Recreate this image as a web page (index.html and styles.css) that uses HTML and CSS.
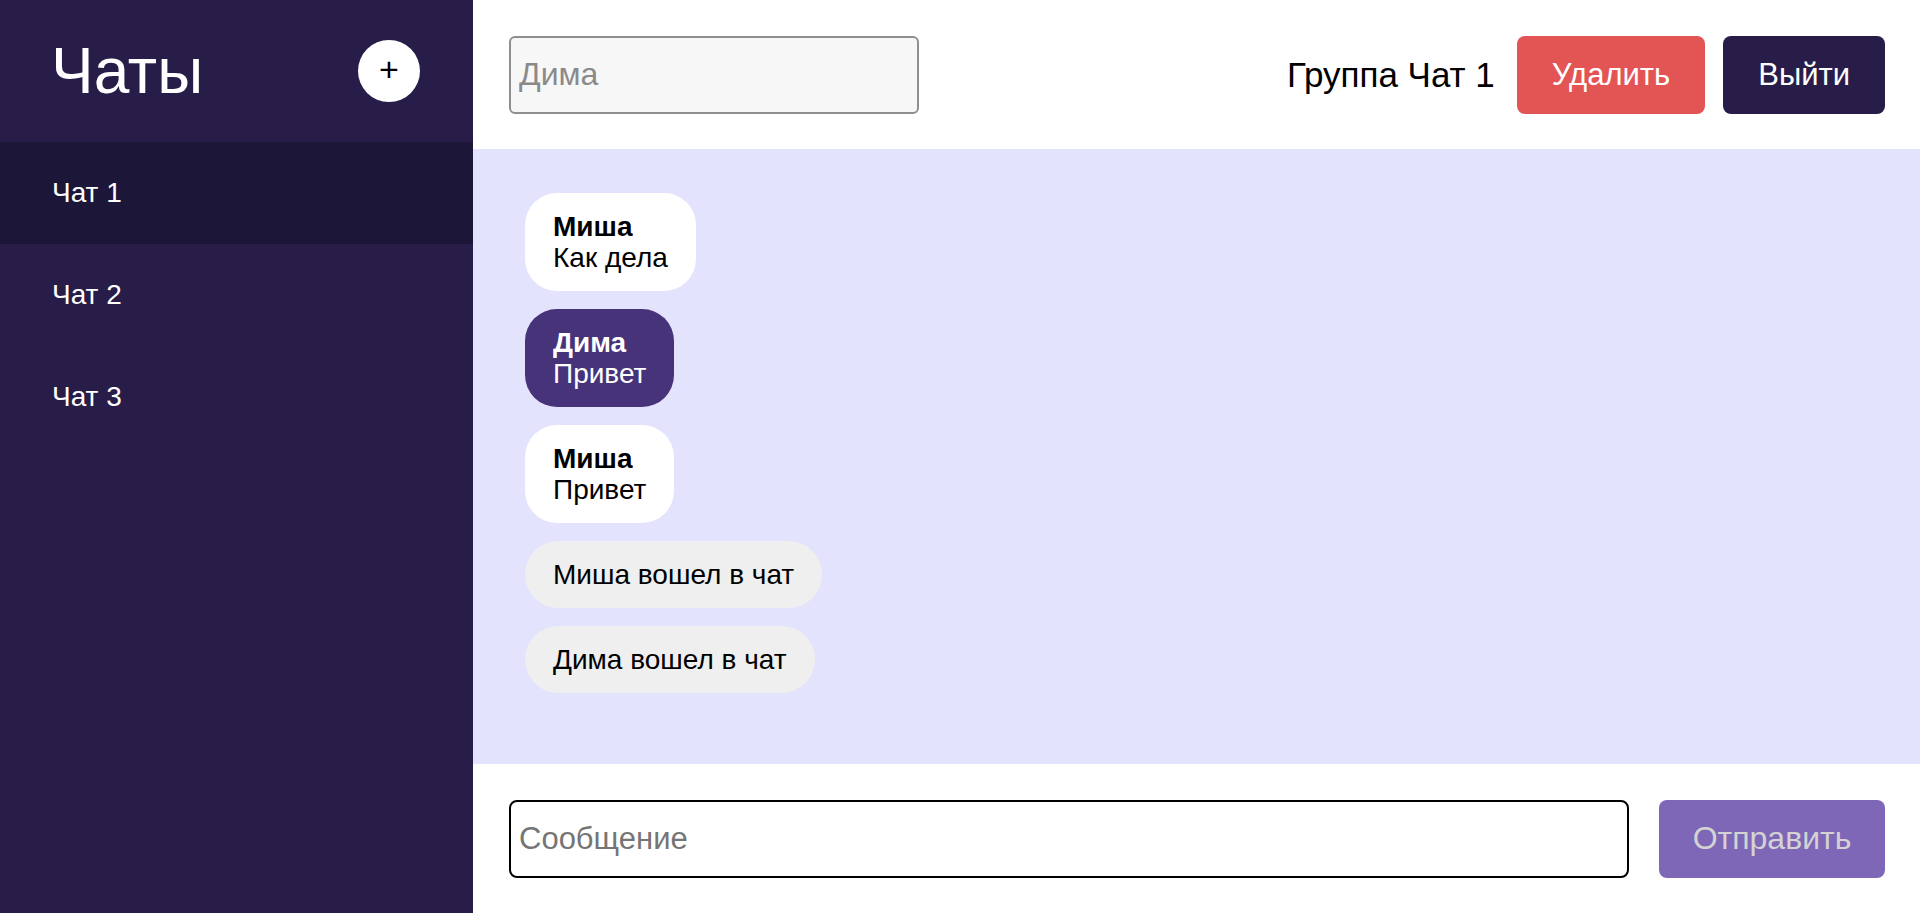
FILE: index.html
```html
<!DOCTYPE html>
<html lang="ru">
<head>
<meta charset="utf-8">
<title>Чаты</title>
<link rel="stylesheet" href="styles.css">
</head>
<body>
<div class="app">
  <aside class="sidebar">
    <div class="sidebar-header">
      <h1 class="sidebar-title">Чаты</h1>
      <button class="add-btn" type="button">+</button>
    </div>
    <ul class="chat-list">
      <li class="chat-item active">Чат 1</li>
      <li class="chat-item">Чат 2</li>
      <li class="chat-item">Чат 3</li>
    </ul>
  </aside>
  <main class="main">
    <header class="topbar">
      <input class="name-input" type="text" placeholder="Дима">
      <div class="topbar-right">
        <span class="group-title">Группа Чат 1</span>
        <button class="btn btn-delete" type="button">Удалить</button>
        <button class="btn btn-logout" type="button">Выйти</button>
      </div>
    </header>
    <section class="messages">
      <div class="bubble">
        <div class="author">Миша</div>
        <div class="text">Как дела</div>
      </div>
      <div class="bubble own">
        <div class="author">Дима</div>
        <div class="text">Привет</div>
      </div>
      <div class="bubble">
        <div class="author">Миша</div>
        <div class="text">Привет</div>
      </div>
      <div class="bubble system">Миша вошел в чат</div>
      <div class="bubble system">Дима вошел в чат</div>
    </section>
    <footer class="composer">
      <input class="message-input" type="text" placeholder="Сообщение">
      <button class="btn btn-send" type="button">Отправить</button>
    </footer>
  </main>
</div>
</body>
</html>
```
FILE: styles.css
```css
* {
  box-sizing: border-box;
}

html, body {
  margin: 0;
  padding: 0;
  height: 100%;
}

body {
  font-family: "Liberation Sans", Arial, sans-serif;
  color: #000;
  background: #fff;
}

.app {
  display: flex;
  height: 100vh;
}

.sidebar {
  width: 473px;
  flex-shrink: 0;
  background: #271d48;
  color: #fff;
  display: flex;
  flex-direction: column;
}

.sidebar-header {
  height: 142px;
  display: flex;
  align-items: center;
  justify-content: space-between;
  padding: 0 53px 0 51px;
}

.sidebar-title {
  margin: 0;
  font-size: 64px;
  font-weight: 400;
  line-height: 1;
}

.add-btn {
  width: 62px;
  height: 62px;
  border-radius: 50%;
  border: none;
  background: #fff;
  color: #000;
  font-family: "Liberation Sans", Arial, sans-serif;
  font-size: 34px;
  line-height: 1;
  padding: 0 0 4px;
  display: flex;
  align-items: center;
  justify-content: center;
}

.chat-list {
  list-style: none;
  margin: 0;
  padding: 0;
}

.chat-item {
  height: 102px;
  display: flex;
  align-items: center;
  padding-left: 52px;
  font-size: 28px;
}

.chat-item.active {
  background: #1c1639;
}

.main {
  flex: 1;
  display: flex;
  flex-direction: column;
  min-width: 0;
}

.topbar {
  height: 149px;
  flex-shrink: 0;
  display: flex;
  align-items: center;
  justify-content: space-between;
  padding: 0 35px 0 36px;
}

.name-input {
  width: 410px;
  height: 78px;
  border: 2px solid #8f8f8f;
  border-radius: 6px;
  background: #f7f7f7;
  font-family: "Liberation Sans", Arial, sans-serif;
  font-size: 32px;
  padding: 0 8px;
  color: #000;
}

.name-input::placeholder {
  color: #8a8a8a;
}

.topbar-right {
  display: flex;
  align-items: center;
}

.group-title {
  font-size: 35px;
  margin-right: 22px;
}

.btn {
  height: 78px;
  border: none;
  border-radius: 8px;
  font-family: "Liberation Sans", Arial, sans-serif;
  font-size: 31px;
  color: #fff;
  padding: 0 35px;
}

.btn-delete {
  background: #e35454;
  margin-right: 18px;
}

.btn-logout {
  background: #271d48;
}

.messages {
  flex: 1;
  background: #e4e3fe;
  padding: 44px 52px;
  display: flex;
  flex-direction: column;
  align-items: flex-start;
  gap: 18px;
}

.bubble {
  background: #fff;
  border-radius: 32px;
  padding: 18px 28px;
  font-size: 28px;
  line-height: 31px;
}

.bubble .author {
  font-weight: 700;
}

.bubble.own {
  background: #46337a;
  color: #fff;
}

.bubble.system {
  background: #efefef;
  border-radius: 34px;
}

.composer {
  height: 149px;
  flex-shrink: 0;
  display: flex;
  align-items: center;
  gap: 30px;
  padding: 0 35px 0 36px;
}

.message-input {
  flex: 1;
  height: 78px;
  border: 2px solid #000;
  border-radius: 8px;
  background: #fff;
  font-family: "Liberation Sans", Arial, sans-serif;
  font-size: 31px;
  padding: 0 8px;
}

.message-input::placeholder {
  color: #757575;
}

.btn-send {
  width: 226px;
  background: #7e67b7;
  color: #d3d3d3;
  font-size: 32px;
  padding: 0;
}
```
